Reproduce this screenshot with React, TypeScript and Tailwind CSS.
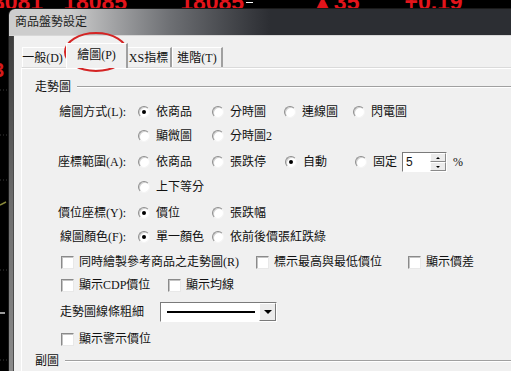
import React from "react";

const Radio = ({ on }: { on?: boolean }) => (
  <span className="flex h-[12px] w-[12px] shrink-0 items-center justify-center rounded-full border border-t-[#8e8e8e] border-l-[#8e8e8e] border-b-[#f4f4f4] border-r-[#f4f4f4] bg-white shadow-[inset_1px_1px_0_#d0d0d0]">
    {on && <span className="h-[4px] w-[4px] rounded-full bg-black" />}
  </span>
);

const Check = () => (
  <span className="h-[13px] w-[13px] shrink-0 border border-t-[#8a8a8a] border-l-[#8a8a8a] border-b-[#e8e8e8] border-r-[#e8e8e8] bg-white shadow-[inset_1px_1px_0_#c4c4c4]" />
);

interface OptProps {
  on?: boolean;
  w: string;
  children: React.ReactNode;
}
const Opt: React.FC<OptProps> = ({ on, w, children }) => (
  <div className={`flex items-center gap-[6px] ${w}`}>
    <Radio on={on} />
    <span className="whitespace-nowrap">{children}</span>
  </div>
);

const Box: React.FC<{ w: string; children: React.ReactNode }> = ({ w, children }) => (
  <div className={`flex items-center gap-[5px] ${w}`}>
    <Check />
    <span className="whitespace-nowrap">{children}</span>
  </div>
);

const Label: React.FC<{ children: React.ReactNode }> = ({ children }) => (
  <span className="mr-[12px] w-[104px] whitespace-nowrap text-right">{children}</span>
);

const Group: React.FC<{ title: string; className?: string }> = ({ title, className }) => (
  <div className={`flex h-[20px] items-center pl-[13px] ${className}`}>
    <span>{title}</span>
    <div className="ml-[6px] flex-1 border-t border-b border-t-[#a0a0a0] border-b-white" />
  </div>
);

const Tab: React.FC<{ on?: boolean; w: string; children: React.ReactNode }> = ({ on, w, children }) => (
  <div
    className={`flex items-center justify-center border-l border-t border-r-2 border-l-white border-t-white border-r-[#a0a0a0] bg-[#f0f0f0] ${w} ${
      on ? "relative z-10 -mx-[2px] -mb-px h-[25px] pb-[2px]" : "h-[20px]"
    }`}
  >
    <span className="whitespace-nowrap">{children}</span>
  </div>
);

export default function App() {
  return (
    <div className="relative h-[371px] w-[511px] overflow-hidden bg-black font-['Liberation_Serif','Noto_Sans_CJK_TC',serif] text-[12px] leading-[14px] text-[#111]">
      {/* quote strip behind the dialog */}
      <div className="flex h-[8px] items-end overflow-hidden font-['Liberation_Sans',sans-serif] text-[23px] font-bold leading-none text-[#e3141b]">
        <span className="-mb-[6px] -ml-[8px]">3081</span>
        <span className="-mb-[6px] ml-[20px]">18085</span>
        <span className="-mb-[6px] ml-[53px]">18085</span>
        <span className="mb-[5px] ml-[2px] h-[1px] w-[7px] bg-white" />
        <span className="-mb-[6px] ml-[58px]">▲35</span>
        <span className="-mb-[6px] ml-[45px]">+0.19</span>
      </div>

      <div className="flex h-[363px]">
        <svg width="8" height="363" className="shrink-0">
          <rect width="8" height="363" fill="#000" />
          <text x="-7" y="69" fill="#d41a1a" fontSize="20" fontWeight="bold" fontFamily="Liberation Sans">3</text>
          <line x1="0" y1="82" x2="8" y2="82" stroke="#3a3a3a" strokeDasharray="1 2" />
          <line x1="0" y1="127" x2="8" y2="127" stroke="#3a3a3a" strokeDasharray="1 2" />
          <line x1="0" y1="172" x2="8" y2="172" stroke="#3a3a3a" strokeDasharray="1 2" />
          <line x1="0" y1="197" x2="6" y2="194" stroke="#8a8a3a" strokeWidth="1.5" />
          <line x1="0" y1="262" x2="8" y2="262" stroke="#3a3a3a" strokeDasharray="1 2" />
          <rect x="0" y="304" width="5" height="2" fill="#9a9a9a" />
          <line x1="0" y1="352" x2="8" y2="352" stroke="#3a3a3a" strokeDasharray="1 2" />
        </svg>

        <div className="flex flex-1 flex-col overflow-hidden rounded-tl-[7px] border-l border-t border-[#1a1a1a]">
          {/* title bar */}
          <div className="flex h-[27px] items-center border-b border-b-[#d8d8d8] bg-linear-to-r from-[#cdcdcd] from-12% via-[#6e7074] via-32% to-[#2c2e33] to-52% pl-[6px]">
            <span className="text-[#1e1e1e]">商品盤勢設定</span>
          </div>

          <div className="flex flex-1">
            <div className="w-[4px] bg-linear-to-b from-[#3c3c3c] via-[#6c6c6c] to-[#8a8a8a]" />
            <div className="flex flex-1 flex-col border-l border-[#4a4a4a] bg-[#f0f0f0] pl-[7px] pt-[7px]">
              {/* tabs */}
              <div className="flex h-[24px] items-end pl-[1px]">
                <Tab w="w-[46px]">
                  <span className="-ml-[4px]">一般(D)</span>
                </Tab>
                <Tab on w="w-[62px]">繪圖(P)</Tab>
                <Tab w="w-[46px]">XS指標</Tab>
                <Tab w="w-[51px]">進階(T)</Tab>
              </div>

              {/* panel */}
              <div className="flex flex-1 flex-col border-l border-t border-l-white border-t-[#dadada] shadow-[inset_0_1px_0_#ffffff]">
                <Group title="走勢圖" className="mt-[9px]" />

                <div className="mt-[5px] flex h-[20px] items-center">
                  <Label>繪圖方式(L):</Label>
                  <Opt on w="w-[74px]">依商品</Opt>
                  <Opt w="w-[72px]">分時圖</Opt>
                  <Opt w="w-[69px]">連線圖</Opt>
                  <Opt w="w-[70px]">閃電圖</Opt>
                </div>

                <div className="mt-[4px] flex h-[20px] items-center pl-[116px]">
                  <Opt w="w-[74px]">顯微圖</Opt>
                  <Opt w="w-[72px]">分時圖2</Opt>
                </div>

                <div className="mt-[6px] flex h-[20px] items-center">
                  <Label>座標範圍(A):</Label>
                  <Opt w="w-[74px]">依商品</Opt>
                  <Opt w="w-[73px]">張跌停</Opt>
                  <Opt on w="w-[70px]">自動</Opt>
                  <Opt w="">固定</Opt>
                  <div className="ml-[5px] flex h-[20px] border border-t-[#7a7a7a] border-l-[#7a7a7a] border-b-white border-r-white">
                    <div className="flex w-[27px] items-center bg-white pl-[3px] font-['Liberation_Sans',sans-serif]">5</div>
                    <div className="flex w-[16px] flex-col">
                      <div className="flex flex-1 items-center justify-center border border-t-white border-l-white border-b-[#8a8a8a] border-r-[#8a8a8a] bg-[#ececec]">
                        <span className="h-0 w-0 border-x-[2px] border-b-[2px] border-x-transparent border-b-black" />
                      </div>
                      <div className="flex flex-1 items-center justify-center border border-t-white border-l-white border-b-[#8a8a8a] border-r-[#8a8a8a] bg-[#ececec]">
                        <span className="h-0 w-0 border-x-[2px] border-t-[2px] border-x-transparent border-t-black" />
                      </div>
                    </div>
                  </div>
                  <span className="ml-[6px]">%</span>
                </div>

                <div className="mt-[5px] flex h-[20px] items-center pl-[116px]">
                  <Opt w="w-[74px]">上下等分</Opt>
                </div>

                <div className="mt-[6px] flex h-[20px] items-center">
                  <Label>價位座標(Y):</Label>
                  <Opt on w="w-[74px]">價位</Opt>
                  <Opt w="w-[72px]">張跌幅</Opt>
                </div>

                <div className="mt-[4px] flex h-[20px] items-center">
                  <Label>線圖顏色(F):</Label>
                  <Opt on w="w-[74px]">單一顏色</Opt>
                  <Opt w="w-[120px]">依前後價張紅跌綠</Opt>
                </div>

                <div className="mt-[5px] flex h-[20px] items-center pl-[39px]">
                  <Box w="w-[195px]">同時繪製參考商品之走勢圖(R)</Box>
                  <Box w="w-[152px]">標示最高與最低價位</Box>
                  <Box w="w-[80px]">顯示價差</Box>
                </div>

                <div className="mt-[3px] flex h-[20px] items-center pl-[39px]">
                  <Box w="w-[107px]">顯示CDP價位</Box>
                  <Box w="w-[80px]">顯示均線</Box>
                </div>

                <div className="mt-[7px] flex h-[20px] items-center pl-[38px]">
                  <span className="w-[100px] whitespace-nowrap">走勢圖線條粗細</span>
                  <div className="flex h-[20px] w-[117px] border border-t-[#7a7a7a] border-l-[#7a7a7a] border-b-white border-r-white bg-white">
                    <div className="flex flex-1 items-center pl-[6px] pr-[4px]">
                      <div className="h-[2px] w-full bg-black" />
                    </div>
                    <div className="flex w-[17px] items-center justify-center border border-t-white border-l-white border-b-[#7a7a7a] border-r-[#7a7a7a] bg-[#ececec]">
                      <span className="h-0 w-0 border-x-[4px] border-t-[4px] border-x-transparent border-t-black" />
                    </div>
                  </div>
                </div>

                <div className="mt-[7px] flex h-[20px] items-center pl-[39px]">
                  <Box w="w-[120px]">顯示警示價位</Box>
                </div>

                <Group title="副圖" className="mt-[2px]" />
              </div>
            </div>
          </div>
        </div>
      </div>

      {/* red annotation circle around the active tab */}
      <svg className="pointer-events-none absolute left-[62px] top-[30px]" width="70" height="44">
        <ellipse cx="34" cy="22" rx="31" ry="19" fill="none" stroke="#d42424" strokeWidth="2" />
      </svg>
    </div>
  );
}
